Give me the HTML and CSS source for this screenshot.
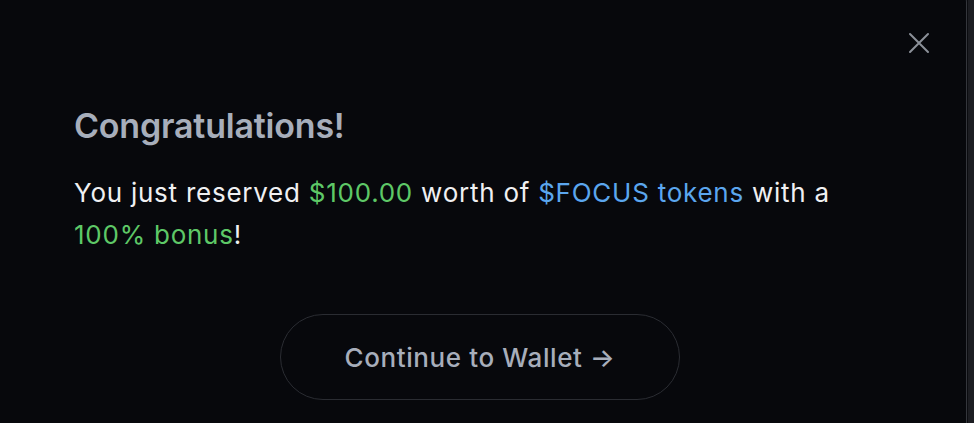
FILE: index.html
```html
<!DOCTYPE html>
<html lang="en">
<head>
<meta charset="utf-8">
<title>Congratulations</title>
<link rel="stylesheet" href="styles.css">
</head>
<body>
<div class="modal">
  <div class="modal-top">
    <button class="close" aria-label="Close">
      <svg width="22" height="22" viewBox="0 0 22 22" fill="none" stroke="currentColor" stroke-width="2" stroke-linecap="round"><path d="M2 2L20 20M20 2L2 20"/></svg>
    </button>
  </div>
  <div class="content">
    <h1 class="title">Congratulations!</h1>
    <p class="message">You just reserved <span class="green">$100.00</span> worth of <span class="blue">$FOCUS tokens</span> with a <span class="green">100% bonus</span>!</p>
    <div class="actions">
      <button class="continue">Continue to Wallet →</button>
    </div>
  </div>
</div>
</body>
</html>
```
FILE: styles.css
```css
html, body {
  margin: 0;
  padding: 0;
  background: #1c1d22;
  overflow: hidden;
}
body {
  font-family: Inter, "Noto Sans", "Liberation Sans", sans-serif;
}
.modal {
  box-sizing: border-box;
  width: 969px;
  height: 470px;
  margin: -20px 0 0 -2px;
  background: #07080c;
  border: 1px solid #34363c;
  border-radius: 22px;
  box-shadow: 1px 0 0 #0b0c10;
}
.modal-top {
  display: flex;
  justify-content: flex-end;
  padding: 51px 36px 0 0;
}
.close {
  background: none;
  border: 0;
  padding: 0;
  width: 22px;
  height: 22px;
  color: #8b9099;
  display: flex;
}
.content {
  padding: 0 60px 0 75px;
}
.title {
  margin: 52px 0 0;
  font-size: 34px;
  line-height: 40px;
  font-weight: 600;
  color: #a7aebb;
  letter-spacing: -0.2px;
}
.message {
  margin: 26px 0 0;
  font-size: 26px;
  line-height: 42px;
  letter-spacing: 0.75px;
  color: #f0f0f2;
  max-width: 800px;
}
.green { color: #5ec867; }
.blue { color: #5ba6ee; }
.actions {
  display: flex;
  padding-left: 206px;
  margin-top: 58px;
}
.continue {
  box-sizing: border-box;
  width: 400px;
  height: 86px;
  border-radius: 43px;
  border: 1px solid #2a2c32;
  background: transparent;
  color: #a7aebb;
  font-family: Inter, "Noto Sans", sans-serif;
  font-size: 26px;
  letter-spacing: 0.6px;
  font-weight: 500;
}
```
